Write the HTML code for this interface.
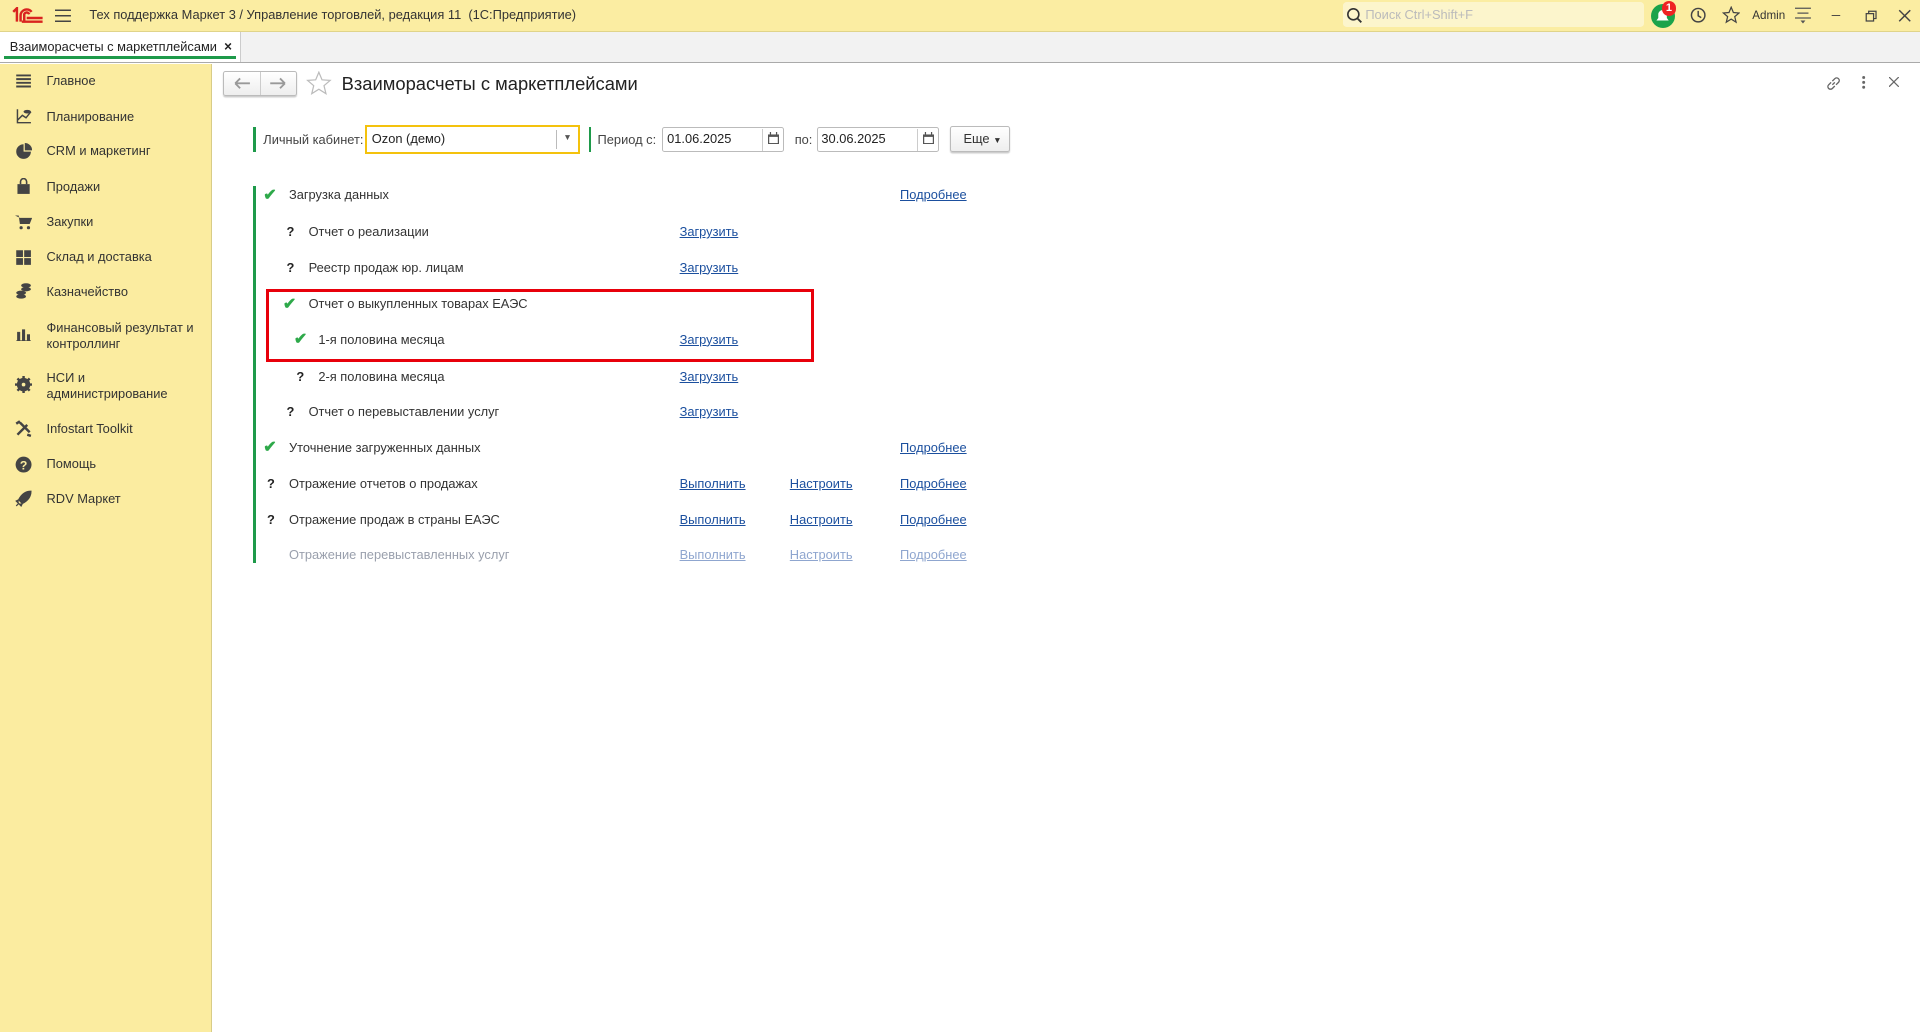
<!DOCTYPE html>
<html><head><meta charset="utf-8"><style>
html,body{margin:0;padding:0;overflow:hidden;width:1920px;height:1032px;background:#fff}
#w{zoom:1.2245;width:1568px;height:843px;position:relative;font-family:"Liberation Sans",sans-serif;font-size:10.5px;color:#333}
.a{position:absolute;white-space:nowrap}
#top{left:0;top:0;width:1568px;height:25px;background:#fbeda2;border-bottom:1px solid #e0d48a}
#tabs{left:0;top:26px;width:1568px;height:25px;background:#f2f2f2;border-bottom:1px solid #aaa}
#side{left:0;top:52px;width:172px;height:791px;background:#fbeca0;border-right:1px solid #d8cc88}
.si{position:absolute;left:38px;line-height:13px;color:#333}
.ic{position:absolute;left:12px;width:14px;height:14px}
a,.l{color:#1b4f9e;text-decoration:underline}
.g{color:#9aa0ad}
.inp{position:absolute;height:20px;border:1px solid #bbb;border-radius:2px;background:#fff;box-sizing:border-box;line-height:18px;padding-left:3px;color:#222}
.ck{color:#2ea94a;font-weight:bold;font-size:13px}
.q{font-weight:bold;color:#222}
</style></head><body><div id="w">
<div class="a" id="top"></div>
<svg class="a" style="left:10px;top:6px" width="26" height="13" viewBox="0 0 26 13"><path d="M1 4l3-3v11M7 12V7a5 5 0 0 1 9-3M10 12V7a2 2 0 0 1 4-1M8 12h17M12 9h13" stroke="#d9231f" stroke-width="2" fill="none"/></svg>
<svg class="a" style="left:45px;top:7px" width="13" height="11"><path d="M0 1h13M0 5.5h13M0 10h13" stroke="#444" stroke-width="1.2"/></svg>
<div class="a" style="left:73px;top:6px;font-size:10.5px;color:#333">Тех поддержка Маркет 3 / Управление торговлей, редакция 11&nbsp; (1С:Предприятие)</div>
<div class="a" style="left:1097px;top:2px;width:246px;height:20px;background:#fcf5cc;border-radius:3px"></div>
<svg class="a" style="left:1099px;top:6px" width="14" height="14"><circle cx="6" cy="6" r="4.5" stroke="#333" stroke-width="1.3" fill="none"/><path d="M9.5 9.5l3 3" stroke="#333" stroke-width="1.5"/></svg>
<div class="a" style="left:1115px;top:6px;color:#bbb">Поиск Ctrl+Shift+F</div>
<div class="a" style="left:1348px;top:3px;width:20px;height:20px;border-radius:10px;background:#1ba34a"></div>
<svg class="a" style="left:1351px;top:6px" width="14" height="14"><path d="M2 11h10l-1.5-2V6a3.5 3.5 0 0 0-7 0v3z" fill="#fff"/></svg>
<div class="a" style="left:1357px;top:1px;width:12px;height:12px;border-radius:6px;background:#e22;color:#fff;font-size:9px;font-weight:bold;text-align:center;line-height:12px">1</div>
<svg class="a" style="left:1379px;top:5px" width="15" height="15"><circle cx="7.5" cy="7.5" r="5.5" stroke="#444" fill="none" stroke-width="1.2"/><path d="M7.5 4v4l2.5 1.5" stroke="#444" fill="none" stroke-width="1.2"/></svg>
<svg class="a" style="left:1406px;top:5px" width="15" height="15"><path d="M7.5 1l1.8 4.3 4.6.4-3.5 3 1.1 4.5-4-2.5-4 2.5 1.1-4.5-3.5-3 4.6-.4z" stroke="#444" fill="none"/></svg>
<div class="a" style="left:1431px;top:7px;font-size:9.5px;color:#333">Admin</div>
<svg class="a" style="left:1466px;top:6px" width="13" height="14"><path d="M0 1h13M2 5h9M0 9h13" stroke="#555"/><path d="M4.5 11h4l-2 2.5z" fill="#555"/></svg>
<div class="a" style="left:1496px;top:1px;color:#444;font-size:12px">_</div>
<svg class="a" style="left:1523px;top:8px" width="10" height="10"><path d="M1 3h6v6H1zM3 3V1h6v6H7" stroke="#444" fill="none"/></svg>
<svg class="a" style="left:1550px;top:7px" width="11" height="11"><path d="M1 1l9 9M10 1l-9 9" stroke="#444" stroke-width="1.2"/></svg>

<div class="a" id="tabs"></div>
<div class="a" style="left:0;top:26px;width:196px;height:25px;background:#fff;border-right:1px solid #ccc"></div>
<div class="a" style="left:8px;top:32px;color:#222">Взаиморасчеты с маркетплейсами&nbsp; <b style="font-size:11px">×</b></div>
<div class="a" style="left:3px;top:46px;width:190px;height:2px;background:#1e9a4a"></div>

<div class="a" id="side"></div>
<svg class="ic" style="top:60px" viewBox="0 0 14 14"><path d="M1 2h12M1 5h12M1 8h12M1 11h12" stroke="#444" stroke-width="1.6"/></svg><div class="si" style="top:60px">Главное</div>
<svg class="ic" style="top:88px" viewBox="0 0 14 14"><path d="M2 1v11h11M2 10l4-4 3 2 4-5" stroke="#444" fill="none" stroke-width="1.2"/><ellipse cx="10" cy="3" rx="3" ry="1.5" fill="#444"/></svg><div class="si" style="top:89px">Планирование</div>
<svg class="ic" style="top:117px" viewBox="0 0 14 14"><path d="M7 1a6 6 0 1 0 6 6H7z" fill="#444"/><path d="M8 0v6h6A6 6 0 0 0 8 0z" fill="#444"/></svg><div class="si" style="top:117px">CRM и маркетинг</div>
<svg class="ic" style="top:145px" viewBox="0 0 14 14"><path d="M2 5h10v8H2z" fill="#444"/><path d="M4.5 5V3a2.5 2.5 0 0 1 5 0v2" stroke="#444" fill="none" stroke-width="1.3"/></svg><div class="si" style="top:146px">Продажи</div>
<svg class="ic" style="top:174px" viewBox="0 0 14 14"><path d="M0 2h3l1 7h8l2-5H4" fill="#444"/><circle cx="5" cy="12" r="1.3" fill="#444"/><circle cx="11" cy="12" r="1.3" fill="#444"/></svg><div class="si" style="top:175px">Закупки</div>
<svg class="ic" style="top:203px" viewBox="0 0 14 14"><path d="M1 1h5.5v5.5H1zM7.5 1H13v5.5H7.5zM1 7.5h5.5V13H1zM7.5 7.5H13V13H7.5z" fill="#444"/></svg><div class="si" style="top:203px">Склад и доставка</div>
<svg class="ic" style="top:231px" viewBox="0 0 14 14"><ellipse cx="5" cy="11" rx="4" ry="1.8" fill="#444"/><ellipse cx="5" cy="8" rx="4" ry="1.8" fill="#444"/><ellipse cx="9" cy="5" rx="4" ry="1.8" fill="#444"/><ellipse cx="9" cy="2" rx="4" ry="1.8" fill="#444"/></svg><div class="si" style="top:232px">Казначейство</div>
<svg class="ic" style="top:266px" viewBox="0 0 14 14"><path d="M1 12h12M2 5h2v7H2zM6 3h2v9H6zM10 7h2v5h-2z" fill="#444" stroke="#444" stroke-width=".5"/></svg><div class="si" style="top:261px">Финансовый результат и<br>контроллинг</div>
<svg class="ic" style="top:307px" viewBox="0 0 14 14"><circle cx="7" cy="7" r="4" fill="none" stroke="#444" stroke-width="3"/><path d="M7 0v14M0 7h14M2 2l10 10M12 2L2 12" stroke="#444" stroke-width="2"/><circle cx="7" cy="7" r="1.5" fill="#fbeca0"/></svg><div class="si" style="top:302px">НСИ и<br>администрирование</div>
<svg class="ic" style="top:343px" viewBox="0 0 14 14"><path d="M2 12L10 4M4 2l8 8M1 3l3-2M10 12l3 1" stroke="#444" stroke-width="2"/></svg><div class="si" style="top:344px">Infostart Toolkit</div>
<svg class="ic" style="top:372px" viewBox="0 0 14 14"><circle cx="7" cy="7" r="6.5" fill="#444"/><text x="7" y="11" font-size="10" font-weight="bold" fill="#fbeca0" text-anchor="middle" font-family="Liberation Sans">?</text></svg><div class="si" style="top:372px">Помощь</div>
<svg class="ic" style="top:400px" viewBox="0 0 14 14"><path d="M13 1c-5 0-8 3-10 7l3 3c4-2 7-5 7-10zM3 8L1 9l2 2M6 11l-1 2-2-2M3 11l-2 2" fill="#444" stroke="#444"/></svg><div class="si" style="top:401px">RDV Маркет</div>

<!-- header -->
<div class="a" style="left:182px;top:58px;width:59px;height:19px;border:1px solid #bbb;border-radius:2px;background:linear-gradient(#fff,#eee);box-shadow:0 1px 1px #ccc"></div>
<div class="a" style="left:212px;top:59px;width:1px;height:19px;background:#ccc"></div>
<svg class="a" style="left:191px;top:62px" width="14" height="12"><path d="M1 6h12M1 6l4-4M1 6l4 4" stroke="#999" stroke-width="1.5" fill="none"/></svg>
<svg class="a" style="left:220px;top:62px" width="14" height="12"><path d="M1 6h12M13 6l-4-4M13 6l-4 4" stroke="#999" stroke-width="1.5" fill="none"/></svg>
<svg class="a" style="left:250px;top:58px" width="21" height="20"><path d="M10.5 1l2.6 6.2 6.6.5-5 4.3 1.6 6.5-5.8-3.6-5.8 3.6 1.6-6.5-5-4.3 6.6-.5z" stroke="#bbb" fill="none"/></svg>
<div class="a" style="left:279px;top:60px;font-size:15px;color:#222">Взаиморасчеты с маркетплейсами</div>
<svg class="a" style="left:1490px;top:61px" width="14" height="14"><path d="M6 8l2-2M5 6L3 8a2 2 0 0 0 3 3l2-2M9 8l2-2a2 2 0 0 0-3-3L6 5" stroke="#666" fill="none" stroke-width="1.1"/></svg>
<svg class="a" style="left:1519px;top:61px" width="6" height="14"><circle cx="3" cy="2" r="1.2" fill="#666"/><circle cx="3" cy="6" r="1.2" fill="#666"/><circle cx="3" cy="10" r="1.2" fill="#666"/></svg>
<svg class="a" style="left:1543px;top:63px" width="8" height="8"><path d="M0 0l8 8M8 0L0 8" stroke="#666"/></svg>

<!-- filter -->
<div class="a" style="left:207px;top:104px;width:2px;height:20px;background:#1e9a4a"></div>
<div class="a" style="left:215px;top:108px;color:#444">Личный кабинет:</div>
<div class="inp" style="left:298px;top:102px;width:176px;height:24px;border:2px solid #f4c20d;border-radius:0;line-height:20px;padding-left:4px">Ozon (демо)</div>
<div class="a" style="left:454px;top:106px;width:1px;height:16px;background:#bbb"></div>
<div class="a" style="left:460px;top:108px;font-size:7px;color:#555">▼</div>
<div class="a" style="left:481px;top:104px;width:2px;height:20px;background:#1e9a4a"></div>
<div class="a" style="left:488px;top:108px;color:#444">Период с:</div>
<div class="inp" style="left:541px;top:104px;width:99px">01.06.2025</div>
<div class="a" style="left:622px;top:105px;width:1px;height:18px;background:#ccc"></div>
<svg class="a" style="left:627px;top:108px" width="9" height="10"><path d="M0 2h9v8H0z" fill="#555"/><path d="M1 4h7v5H1z" fill="#fff"/><path d="M2 0v3M7 0v3" stroke="#555"/></svg>
<div class="a" style="left:649px;top:108px;color:#444">по:</div>
<div class="inp" style="left:667px;top:104px;width:100px">30.06.2025</div>
<div class="a" style="left:749px;top:105px;width:1px;height:18px;background:#ccc"></div>
<svg class="a" style="left:754px;top:108px" width="9" height="10"><path d="M0 2h9v8H0z" fill="#555"/><path d="M1 4h7v5H1z" fill="#fff"/><path d="M2 0v3M7 0v3" stroke="#555"/></svg>
<div class="a" style="left:776px;top:103px;width:49px;height:21px;border:1px solid #bbb;border-radius:2px;background:linear-gradient(#fff,#eee);box-shadow:0 1px 1px #ccc;box-sizing:border-box;line-height:19px;padding-left:10px;color:#333">Еще <span style="font-size:7px">▼</span></div>

<!-- list -->
<div class="a" style="left:207px;top:152px;width:2px;height:308px;background:#1e9a4a"></div>
<div class="a ck" style="left:215px;top:151px">✔</div><div class="a" style="left:236px;top:153px">Загрузка данных</div><a class="a" style="left:735px;top:153px">Подробнее</a>
<div class="a q" style="left:234px;top:183px">?</div><div class="a" style="left:252px;top:183px">Отчет о реализации</div><a class="a" style="left:555px;top:183px">Загрузить</a>
<div class="a q" style="left:234px;top:212px">?</div><div class="a" style="left:252px;top:212px">Реестр продаж юр. лицам</div><a class="a" style="left:555px;top:212px">Загрузить</a>
<div class="a ck" style="left:231px;top:240px">✔</div><div class="a" style="left:252px;top:242px">Отчет о выкупленных товарах ЕАЭС</div>
<div class="a ck" style="left:240px;top:269px">✔</div><div class="a" style="left:260px;top:271px">1-я половина месяца</div><a class="a" style="left:555px;top:271px">Загрузить</a>
<div class="a" style="left:217px;top:236px;width:443px;height:55px;border:3px solid #e8000b"></div>
<div class="a q" style="left:242px;top:301px">?</div><div class="a" style="left:260px;top:301px">2-я половина месяца</div><a class="a" style="left:555px;top:301px">Загрузить</a>
<div class="a q" style="left:234px;top:330px">?</div><div class="a" style="left:252px;top:330px">Отчет о перевыставлении услуг</div><a class="a" style="left:555px;top:330px">Загрузить</a>
<div class="a ck" style="left:215px;top:357px">✔</div><div class="a" style="left:236px;top:359px">Уточнение загруженных данных</div><a class="a" style="left:735px;top:359px">Подробнее</a>
<div class="a q" style="left:218px;top:389px">?</div><div class="a" style="left:236px;top:389px">Отражение отчетов о продажах</div><a class="a" style="left:555px;top:389px">Выполнить</a><a class="a" style="left:645px;top:389px">Настроить</a><a class="a" style="left:735px;top:389px">Подробнее</a>
<div class="a q" style="left:218px;top:418px">?</div><div class="a" style="left:236px;top:418px">Отражение продаж в страны ЕАЭС</div><a class="a" style="left:555px;top:418px">Выполнить</a><a class="a" style="left:645px;top:418px">Настроить</a><a class="a" style="left:735px;top:418px">Подробнее</a>
<div class="a g" style="left:236px;top:447px">Отражение перевыставленных услуг</div><a class="a" style="left:555px;top:447px;color:#8fa6cf">Выполнить</a><a class="a" style="left:645px;top:447px;color:#8fa6cf">Настроить</a><a class="a" style="left:735px;top:447px;color:#8fa6cf">Подробнее</a>
</div></body></html>
